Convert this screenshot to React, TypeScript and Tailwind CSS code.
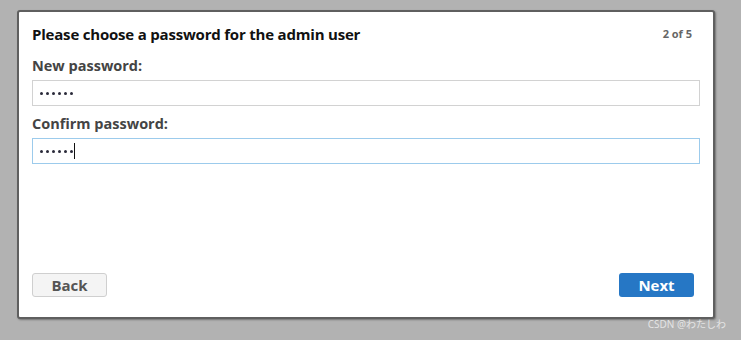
import React from 'react';

const Dots = () => (
  <div className="flex items-center gap-[3px]">
    {[0, 1, 2, 3, 4, 5].map((i) => (
      <span key={i} className="w-[3px] h-[3px] rounded-full bg-[#2a2a3a]" />
    ))}
  </div>
);

const PasswordStep = () => {
  return (
    <div
      className="w-[741px] h-[340px] bg-[#b2b2b2] pt-[10px] pl-[17px] relative"
      style={{ fontFamily: '"Open Sans", "Noto Sans", sans-serif' }}
    >
      <div className="w-[698px] h-[309px] bg-white border-2 border-[#5f5f5f] rounded-[3px] shadow-[1px_1px_2px_rgba(0,0,0,0.35)] px-[13px] pt-[12px] pb-[20px] flex flex-col">
        <div className="flex items-center justify-between h-[20px]">
          <h1 className="text-[15px] font-bold text-[#111] leading-none tracking-[-0.2px]">
            Please choose a password for the admin user
          </h1>
          <span className="text-[11px] font-bold text-[#666] mr-[8px]">2 of 5</span>
        </div>

        <label className="mt-[12px] text-[14.5px] font-bold text-[#444] leading-[20px]">New password:</label>
        <div className="mt-[4px] h-[26px] border border-[#d2d2d2] flex items-center pl-[7px]">
          <Dots />
        </div>

        <label className="mt-[8px] text-[14.5px] font-bold text-[#444] leading-[20px]">Confirm password:</label>
        <div className="mt-[4px] h-[26px] border border-[#9ccbec] flex items-center pl-[7px]">
          <Dots />
          <span className="w-px h-[16px] bg-[#111] ml-[1px]" />
        </div>

        <div className="mt-auto flex justify-between">
          <button className="w-[75px] h-[24px] bg-[#f4f4f4] border border-[#cfcfcf] rounded-[3px] text-[15px] font-bold text-[#555]">
            Back
          </button>
          <button className="w-[75px] h-[24px] bg-[#2677c5] rounded-[3px] text-[15px] font-bold text-white mr-[6px]">
            Next
          </button>
        </div>
      </div>
      <span
        className="absolute right-[15px] bottom-[8px] text-[10px] text-[#e4e4e4]"
        style={{ fontFamily: '"Noto Sans", "Noto Sans CJK JP", sans-serif' }}
      >
        CSDN @わたしわ
      </span>
    </div>
  );
};

export default function App() {
  return <PasswordStep />;
}
